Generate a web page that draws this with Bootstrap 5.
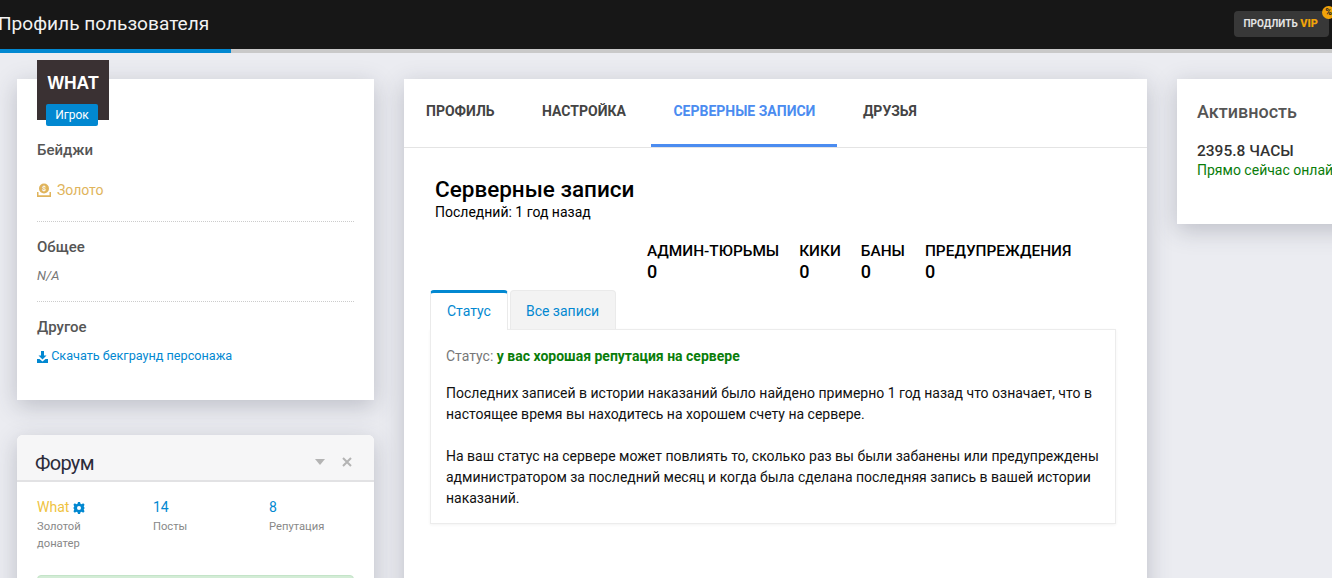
<!DOCTYPE html>
<html lang="ru">
<head>
    <meta charset="UTF-8">
    <meta name="viewport" content="width=device-width, initial-scale=1.0">
    <title>Профиль пользователя</title>
    <link href="https://cdn.jsdelivr.net/npm/bootstrap@5.3.0/dist/css/bootstrap.min.css" rel="stylesheet">
    <style>
        html, body { height: 100%; overflow: hidden; }
        body { background: #ebecf1; font-family: Roboto, "Liberation Sans", sans-serif; font-size: 14px; color: #000; }
        a { text-decoration: none; color: #0288d1; }

        .top-bar { height: 49px; background: #171717; padding-left: 0; padding-right: 3px; }
        .top-title { font-size: 19.1px; color: #f2f2f2; margin-left: -2px; line-height: 45px; margin-bottom: 2px; }
        .vip-btn { height: 26px; padding: 0 11px 0 10px; margin-bottom: 1px; background: #383838; border-radius: 4px; font-size: 10px; font-weight: 700; color: #e4e4e4; line-height: 26px; }
        .vip-btn b { color: #f0a30a; font-size: 11px; }
        .vip-mark { top: -5px; right: -6px; width: 13px; height: 13px; border-radius: 50%; background: #f0a30a; color: #222; font-size: 9px; font-weight: 700; line-height: 13px; text-align: center; }
        .load-line { height: 4px; background: #c9c9c9; }
        .load-line div { width: 231px; height: 4px; background: #0288d1; }

        .page-cols { padding: 26px 0 0 17px; gap: 30px; width: 1500px; }
        .side-col { width: 357px; flex: none; }
        .mid-col { width: 743px; flex: none; }
        .right-col { width: 340px; flex: none; }
        .soft-card { background: #fff; box-shadow: 0 6px 22px rgba(50, 55, 75, .25); }

        .user-card { display: flow-root; height: 321px; padding: 0 20px; margin-bottom: 35px; }
        .avatar-box { width: 72px; height: 60px; background: #3a3133; margin-top: -19px; color: #fff; font-weight: 700; font-size: 17.5px; text-align: center; padding-top: 12px; line-height: 22px; font-family: "Liberation Sans", sans-serif; }
        .role-tag { top: 44px; left: 9px; width: 52px; height: 22px; background: #0288d1; color: #fff; font: 400 12px/22px Roboto, sans-serif; border-radius: 2px; }
        .block-title { font-size: 15px; font-weight: 500; color: #555; line-height: 20px; }
        .gold-line { color: #e0b45c; font-size: 14px; line-height: 20px; margin-top: 20px; padding-bottom: 21px; border-bottom: 1px dotted #ccc; gap: 6px; }
        .na-line { font-style: italic; font-size: 13px; color: #777; line-height: 18px; margin-top: 10px; padding-bottom: 16px; border-bottom: 1px dotted #ccc; }
        .dl-link { font-size: 12.65px; line-height: 18px; margin-top: 10px; }
        .title-badges { margin-top: 20px; }
        .title-common { margin-top: 15px; }
        .title-other { margin-top: 15px; }

        .forum-card { border-radius: 6px 6px 0 0; }
        .forum-head { height: 47px; background: #f6f6f7; border-bottom: 2px solid #e2e2e4; border-radius: 6px 6px 0 0; padding: 8px 22px 0 18px; }
        .forum-title { font-size: 20px; color: #2c2c3a; letter-spacing: -.7px; margin-top: 2px; }
        .forum-tools { gap: 17px; }
        .forum-body { padding: 15px 20px; height: 140px; }
        .stat-cell { width: 116px; flex: none; }
        .stat-top { font-size: 14px; line-height: 20px; color: #0288d1; }
        .stat-gold { color: #efc33f; }
        .stat-sub { font-size: 11.2px; line-height: 17px; color: #888; margin-top: 1px; }
        .green-box { height: 30px; background: #d3ecd6; border: 1px solid #c4e4c8; border-radius: 4px; margin-top: 23px; }

        .main-panel { height: 560px; }
        .main-tabs { height: 69px; border-bottom: 1px solid #e4e4e4; gap: 3.5px; }
        .main-tabs a { height: 68px; padding: 0 22px; line-height: 65px; font-size: 14px; font-weight: 700; color: #444; text-transform: uppercase; border-bottom: 3px solid transparent; }
        .main-tabs a.on { color: #4b8cf0; border-bottom-color: #4b8cf0; }
        .rec-body { padding: 28px 31px 0 26px; }
        .rec-title { font-size: 22.5px; font-weight: 500; line-height: 26px; color: #000; margin: 0 0 1px 5px; }
        .rec-sub { font-size: 14px; line-height: 18px; margin-left: 5px; }
        .rec-stats { margin: 20px 0 0 217px; gap: 20px; }
        .rec-stats div { font-size: 15.4px; font-weight: 500; line-height: 20px; text-transform: uppercase; }
        .rec-stats span { display: block; font-size: 18px; line-height: 22px; }
        .sub-tabs { margin-top: 7px; gap: 2px; height: 39px; }
        .sub-tabs a { display: block; height: 39px; padding: 0 16px 0 15px; line-height: 41px; font-size: 14px; background: #f3f3f3; border: 1px solid #eaeaea; border-bottom: 0; border-radius: 4px 4px 0 0; }
        .sub-tabs a.on { background: #fff; border-top: 3px solid #0288d1; padding: 0 16px; line-height: 37px; position: relative; z-index: 1; margin-bottom: -1px; height: 40px; }
        .sub-pane { border: 1px solid #ececec; box-shadow: 0 1px 3px rgba(0, 0, 0, .05); padding: 16px 15px 9px; height: 195px; font-size: 14px; line-height: 21px; color: #111; }
        .sub-pane p { margin: 0 0 21px; }
        .sub-pane p.status-line { margin-bottom: 16px; }
        .status-label { color: #777; }
        .status-good { color: #0a7d0a; font-weight: 700; }

        .active-card { height: 145px; padding: 21px 20px; }
        .active-title { font-size: 18px; font-weight: 500; color: #555; line-height: 24px; }
        .active-hours { font-size: 15.5px; font-weight: 500; color: #333; line-height: 18px; margin-top: 18px; text-transform: uppercase; }
        .active-now { color: #0a7d0a; font-size: 14px; line-height: 20px; }
    </style>
</head>
<body>
    <!-- top bar -->
    <div class="top-bar d-flex align-items-center justify-content-between">
        <div class="top-title">Профиль пользователя</div>
        <div class="vip-btn position-relative">ПРОДЛИТЬ <b>VIP</b><span class="vip-mark position-absolute">%</span></div>
    </div>
    <div class="load-line"><div></div></div>

    <div class="page-cols d-flex align-items-start">
        <!-- left column -->
        <div class="side-col">
            <div class="user-card soft-card">
                <div class="avatar-box position-relative">WHAT
                    <span class="role-tag position-absolute">Игрок</span>
                </div>
                <div class="block-title title-badges">Бейджи</div>
                <div class="gold-line d-flex align-items-center">
                    <svg width="14" height="14" viewBox="0 0 14 14"><circle cx="7" cy="5.5" r="5" fill="#e0b45c"/><path d="M0 9h1.5v3.200h11V9H14v5H0z" fill="#e0b45c"/><text x="7" y="8" font-size="7" font-weight="700" text-anchor="middle" fill="#fff">$</text></svg>
                    <span>Золото</span>
                </div>
                <div class="block-title title-common">Общее</div>
                <div class="na-line">N/A</div>
                <div class="block-title title-other">Другое</div>
                <div class="dl-link"><a href="#">
                    <svg width="11" height="12" viewBox="0 0 11 12"><path d="M4 0h3v4.500h2.500L5.500 8.500 1.500 4.500H4z" fill="#0288d1"/><path d="M0 8h2.500l3 2.500 3-2.500H11v4H0z" fill="#0288d1"/></svg>
                    Скачать бекграунд персонажа</a></div>
            </div>

            <div class="forum-card soft-card">
                <div class="forum-head d-flex align-items-center justify-content-between">
                    <div class="forum-title">Форум</div>
                    <div class="d-flex align-items-center forum-tools">
                        <svg width="10" height="6" viewBox="0 0 10 6"><path d="M0 0h10L5 6z" fill="#b4b4b4"/></svg>
                        <svg width="10" height="10" viewBox="0 0 10 10"><path d="M1 1l8 8M9 1L1 9" stroke="#b4b4b4" stroke-width="2"/></svg>
                    </div>
                </div>
                <div class="forum-body">
                    <div class="d-flex">
                        <div class="stat-cell">
                            <div class="stat-top stat-gold">What
                                <svg width="12" height="12" viewBox="0 0 24 24"><path d="M10 0h4l1 3.400 2.200 1L20.400 2.700l2.800 2.900-1.700 3.100.9 2.200L24 12l-1.600 1.100-.9 2.200 1.700 3.100-2.800 2.900-3.200-1.700-2.200 1L14 24h-4l-1-3.400-2.200-1-3.200 1.700L.8 18.400l1.700-3.100-.9-2.200L0 12l1.600-1.100.9-2.200L.8 5.600l2.800-2.900 3.200 1.700 2.200-1z" fill="#0288d1"/><circle cx="12" cy="12" r="4" fill="#fff"/></svg>
                            </div>
                            <div class="stat-sub">Золотой<br>донатер</div>
                        </div>
                        <div class="stat-cell"><div class="stat-top">14</div><div class="stat-sub">Посты</div></div>
                        <div class="stat-cell"><div class="stat-top">8</div><div class="stat-sub">Репутация</div></div>
                    </div>
                    <div class="green-box"></div>
                </div>
            </div>
        </div>

        <!-- middle column -->
        <div class="mid-col main-panel soft-card">
            <div class="main-tabs d-flex">
                <a href="#">Профиль</a>
                <a href="#">Настройка</a>
                <a href="#" class="on">Серверные записи</a>
                <a href="#">Друзья</a>
            </div>
            <div class="rec-body">
                <h4 class="rec-title">Серверные записи</h4>
                <div class="rec-sub">Последний: 1 год назад</div>
                <div class="rec-stats d-flex">
                    <div>Админ-тюрьмы<span>0</span></div>
                    <div>Кики<span>0</span></div>
                    <div>Баны<span>0</span></div>
                    <div>Предупреждения<span>0</span></div>
                </div>
                <div class="sub-tabs d-flex">
                    <a href="#" class="on">Статус</a>
                    <a href="#">Все записи</a>
                </div>
                <div class="sub-pane">
                    <p class="status-line"><span class="status-label">Статус:</span> <span class="status-good">у вас хорошая репутация на сервере</span></p>
                    <p>Последних записей в истории наказаний было найдено примерно 1 год назад что означает, что в настоящее время вы находитесь на хорошем счету на сервере.</p>
                    <p>На ваш статус на сервере может повлиять то, сколько раз вы были забанены или предупреждены администратором за последний месяц и когда была сделана последняя запись в вашей истории наказаний.</p>
                </div>
            </div>
        </div>

        <!-- right column -->
        <div class="right-col active-card soft-card">
            <div class="active-title">Активность</div>
            <div class="active-hours">2395.8 часы</div>
            <div class="active-now">Прямо сейчас онлайн</div>
        </div>
    </div>

    <script src="https://cdn.jsdelivr.net/npm/bootstrap@5.3.0/dist/js/bootstrap.bundle.min.js"></script>
</body>
</html>
